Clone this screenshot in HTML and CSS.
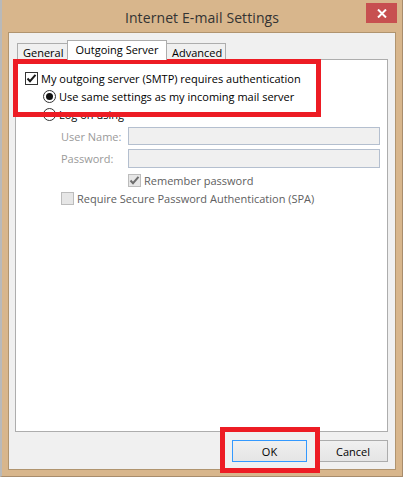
FILE: index.html
```html
<!DOCTYPE html>
<html>
<head>
<meta charset="utf-8">
<link rel="stylesheet" href="styles.css">
</head>
<body>
<div class="window">
  <div class="titlebar">
    <span class="title">Internet E-mail Settings</span>
    <button class="close" aria-label="Close">
      <svg width="10" height="9" viewBox="0 0 10 9"><path d="M1 0.5 L9 8.5 M9 0.5 L1 8.5" stroke="#fff" stroke-width="2"/></svg>
    </button>
  </div>
  <div class="client">
    <div class="tabs">
      <div class="tab">General</div>
      <div class="tab active">Outgoing Server</div>
      <div class="tab">Advanced</div>
    </div>
    <div class="panel">
      <div class="row">
        <span class="chk">
          <svg width="11" height="11" viewBox="0 0 11 11"><path d="M1.5 5.5 L4 8.2 L9.5 1.8" fill="none" stroke="#1a1a1a" stroke-width="2"/></svg>
        </span>
        <span class="lbl">My outgoing server (SMTP) requires authentication</span>
      </div>
      <div class="row indent1">
        <span class="radio checked"></span>
        <span class="lbl">Use same settings as my incoming mail server</span>
      </div>
      <div class="row indent1">
        <span class="radio"></span>
        <span class="lbl">Log on using</span>
      </div>
      <div class="field user">
        <span class="flbl">User Name:</span>
        <span class="input"></span>
      </div>
      <div class="field pass">
        <span class="flbl">Password:</span>
        <span class="input"></span>
      </div>
      <div class="row small remember">
        <span class="chk dis">
          <svg width="11" height="11" viewBox="0 0 11 11"><path d="M1.5 5.5 L4 8.2 L9.5 1.8" fill="none" stroke="#6e6e6e" stroke-width="2"/></svg>
        </span>
        <span class="lbl dtext">Remember password</span>
      </div>
      <div class="row small spa">
        <span class="chk dis"></span>
        <span class="lbl dtext">Require Secure Password Authentication (SPA)</span>
      </div>
    </div>
    <div class="buttons">
      <button class="btn ok">OK</button>
      <button class="btn cancel">Cancel</button>
    </div>
  </div>
</div>
<div class="mark mark-auth"></div>
<div class="mark mark-ok"></div>
</body>
</html>
```
FILE: styles.css
```css
html, body {
  margin: 0;
  padding: 0;
  background: #d8b68c;
}
body {
  position: relative;
  width: 403px;
  height: 477px;
  overflow: hidden;
  font-family: "Open Sans", "Noto Sans", sans-serif;
  font-size: 11px;
  color: #000;
}
.window {
  box-sizing: border-box;
  width: 403px;
  height: 477px;
  background: #d8b68c;
  border-left: 2px solid #b9b9b9;
  border-right: 1px solid #a88c6c;
  border-bottom: 1px solid #a88c6c;
  display: flex;
  flex-direction: column;
}
.titlebar {
  height: 32px;
  flex: none;
  display: grid;
  grid-template-columns: 1fr auto 1fr;
}
.title {
  grid-column: 2;
  font-size: 14px;
  color: #333;
  line-height: 36px;
  letter-spacing: 0.1px;
}
.close {
  grid-column: 3;
  justify-self: end;
  align-self: start;
  margin: 3px 5px 0 0;
  width: 31px;
  height: 20px;
  padding: 0;
  border: none;
  background: #c75050;
  display: flex;
  align-items: center;
  justify-content: center;
}
.client {
  flex: 1;
  margin: 0 6px 6px 6px;
  border: 1px solid #b0946f;
  background: #f0f0f0;
  padding: 7px 7px 0 6px;
  display: flex;
  flex-direction: column;
}
.tabs {
  display: flex;
  align-items: flex-end;
  padding-left: 2px;
  height: 19px;
  position: relative;
  z-index: 1;
}
.tab {
  box-sizing: border-box;
  height: 16px;
  border: 1px solid #adadad;
  border-bottom: none;
  background: #f0f0f0;
  padding: 0 5px;
  line-height: 17px;
  color: #000;
}
.tab:first-child {
  width: 50px;
  border-right: none;
}
.tab.active {
  width: 100px;
  height: 20px;
  margin-bottom: -1px;
  background: #fff;
  text-align: center;
  line-height: 17px;
  padding: 0;
}
.tab:last-child {
  width: 59px;
  border-left: none;
}
.panel {
  box-sizing: border-box;
  height: 373px;
  border: 1px solid #adadad;
  background: #fff;
  padding: 9px 7px 0 9px;
  display: flex;
  flex-direction: column;
}
.row {
  height: 18px;
  display: flex;
  align-items: center;
}
.indent1 {
  padding-left: 18px;
}
.chk {
  box-sizing: border-box;
  width: 13px;
  height: 13px;
  border: 1px solid #333;
  background: #fff;
  display: flex;
  align-items: center;
  justify-content: center;
  flex: none;
}
.chk.dis {
  border-color: #bcbcbc;
  background: #e6e6e6;
}
.radio {
  box-sizing: border-box;
  width: 13px;
  height: 13px;
  border: 1px solid #333;
  border-radius: 50%;
  background: #fff;
  flex: none;
  display: flex;
  align-items: center;
  justify-content: center;
}
.radio.checked::after {
  content: "";
  width: 7px;
  height: 7px;
  border-radius: 50%;
  background: #111;
}
.lbl {
  margin-left: 3px;
  white-space: nowrap;
}
.dtext {
  color: #606060;
}
.field {
  display: flex;
  align-items: center;
  padding-left: 36px;
}
.field.user {
  margin-top: 4px;
  height: 18px;
}
.field.pass {
  margin-top: 4px;
  height: 19px;
}
.flbl {
  width: 67px;
  color: #9a9a9a;
  flex: none;
}
.input {
  box-sizing: border-box;
  flex: 1;
  height: 100%;
  border: 1px solid #b4bfcf;
  background: #f0f0f0;
}
.row.small {
  height: 13px;
}
.remember {
  margin-top: 6px;
  padding-left: 103px;
}
.spa {
  margin-top: 5px;
  padding-left: 36px;
}
.buttons {
  display: flex;
  justify-content: flex-end;
  gap: 11px;
  margin-top: 8px;
}
.btn {
  box-sizing: border-box;
  height: 22px;
  border: 1px solid #acacac;
  background: linear-gradient(#f0f0f0, #e5e5e5);
  font-family: "Open Sans", "Noto Sans", sans-serif;
  font-size: 11px;
  color: #000;
  padding: 0;
}
.btn.ok {
  width: 75px;
  border-color: #3399ff;
}
.btn.cancel {
  width: 70px;
}
.mark {
  position: absolute;
  box-sizing: border-box;
  border: 5px solid #ed1c24;
}
.mark-auth {
  left: 13px;
  top: 59px;
  width: 308px;
  height: 58px;
}
.mark-ok {
  left: 220px;
  top: 427px;
  width: 100px;
  height: 46px;
}
```
